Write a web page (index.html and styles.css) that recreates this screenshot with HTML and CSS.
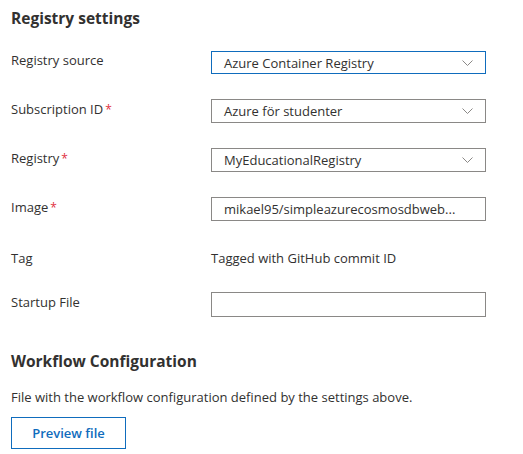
FILE: index.html
```html
<!DOCTYPE html>
<html>
<head>
<meta charset="utf-8">
<link rel="stylesheet" href="styles.css">
</head>
<body>
<div class="page">
  <h2 class="section-title">Registry settings</h2>
  <div class="form">
    <div class="row">
      <div class="label">Registry source</div>
      <div class="dropdown focused"><span>Azure Container Registry</span><svg class="chev" width="11" height="6" viewBox="0 0 11 6"><path d="M0.5 0.5 L5.5 5.5 L10.5 0.5" fill="none" stroke="#8a8886" stroke-width="1"/></svg></div>
    </div>
    <div class="row">
      <div class="label">Subscription ID<span class="req">*</span></div>
      <div class="dropdown"><span>Azure för studenter</span><svg class="chev" width="11" height="6" viewBox="0 0 11 6"><path d="M0.5 0.5 L5.5 5.5 L10.5 0.5" fill="none" stroke="#8a8886" stroke-width="1"/></svg></div>
    </div>
    <div class="row">
      <div class="label">Registry<span class="req">*</span></div>
      <div class="dropdown"><span>MyEducationalRegistry</span><svg class="chev" width="11" height="6" viewBox="0 0 11 6"><path d="M0.5 0.5 L5.5 5.5 L10.5 0.5" fill="none" stroke="#8a8886" stroke-width="1"/></svg></div>
    </div>
    <div class="row">
      <div class="label">Image<span class="req">*</span></div>
      <div class="textbox"><span>mikael95/simpleazurecosmosdbweb...</span></div>
    </div>
    <div class="row row-tag">
      <div class="label tag">Tag</div>
      <div class="value">Tagged with GitHub commit ID</div>
    </div>
    <div class="row row-startup">
      <div class="label">Startup File</div>
      <div class="textbox tall"></div>
    </div>
  </div>
  <h2 class="section-title second">Workflow Configuration</h2>
  <p class="desc">File with the workflow configuration defined by the settings above.</p>
  <button class="btn">Preview file</button>
</div>
</body>
</html>
```
FILE: styles.css
```css
html, body {
  margin: 0;
  padding: 0;
  background: #ffffff;
}
body {
  font-family: "Open Sans", "Noto Sans", sans-serif;
  color: #323130;
  font-size: 13px;
}
.page {
  padding: 8px 11px 0 11px;
}
.section-title {
  margin: 0;
  font-size: 15.5px;
  font-weight: 700;
  line-height: 20px;
  color: #323130;
}
.form {
  display: flex;
  flex-direction: column;
  gap: 25px;
  margin-top: 22px;
}
.row {
  display: grid;
  grid-template-columns: 200px 275px;
  align-items: start;
  height: 24px;
}
.row-tag {
  margin-bottom: -3px;
}
.label {
  font-size: 13px;
  line-height: 20px;
  margin-top: 0;
}
.label.tag {
  margin-top: 2px;
}
.req {
  color: #e0303f;
  margin-left: 2px;
  font-size: 12px;
}
.dropdown, .textbox {
  box-sizing: border-box;
  height: 24px;
  border: 1px solid #8a8886;
  display: flex;
  align-items: center;
  padding: 0 12px 0 12px;
  justify-content: space-between;
  font-size: 13px;
  white-space: nowrap;
  overflow: hidden;
}
.textbox.tall {
  height: 25px;
}
.dropdown.focused {
  border-color: #0f6cbd;
  height: 23px;
  margin-top: 1px;
}
.chev {
  flex: none;
}
.value {
  font-size: 13px;
  line-height: 20px;
  margin-top: 2px;
}
.second {
  margin-top: 35px;
}
.desc {
  margin: 16px 0 0 0;
  font-size: 13px;
  line-height: 20px;
  color: #323130;
}
.btn {
  margin-top: 10px;
  width: 115px;
  height: 32px;
  border: 1px solid #0f6cbd;
  background: #ffffff;
  color: #0f6cbd;
  font-family: "Open Sans", "Noto Sans", sans-serif;
  font-size: 13px;
  font-weight: 600;
  padding: 0;
}
```
